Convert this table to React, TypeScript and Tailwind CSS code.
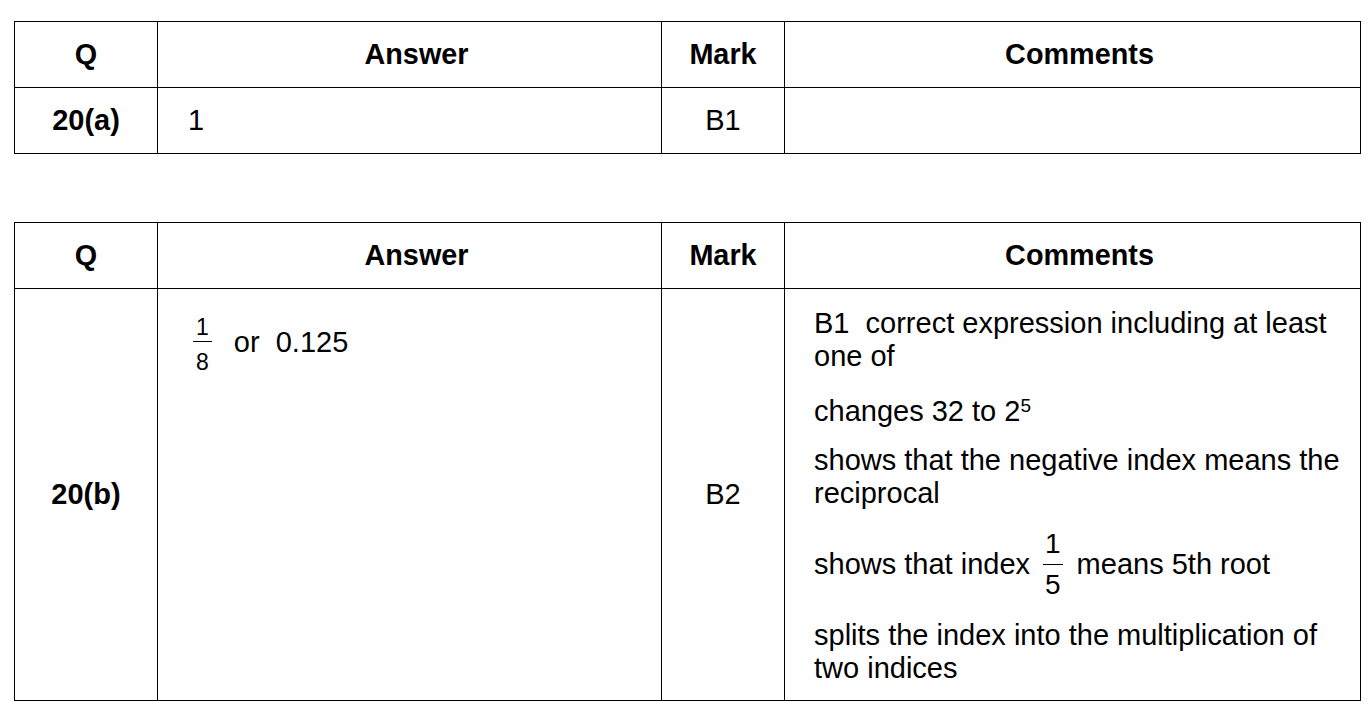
import React from "react";

const cell = "border border-black p-0";

function Frac({ num, den, small }: { num: string; den: string; small?: boolean }) {
  if (small) {
    return (
      <span className="inline-flex flex-col items-stretch pt-[4px] text-[23px] leading-[24px]">
        <span className="px-[3px] pb-[2px] text-center">{num}</span>
        <span className="h-px bg-black" />
        <span className="px-[3px] pt-[8px] text-center">{den}</span>
      </span>
    );
  }
  return (
    <span className="ml-[13px] mr-[14px] inline-flex flex-col items-stretch text-[28px] leading-[28px]">
      <span className="px-[2px] pb-[6px] text-center">{num}</span>
      <span className="h-px bg-black" />
      <span className="px-[2px] pt-[6px] text-center">{den}</span>
    </span>
  );
}

function Header() {
  return (
    <thead>
      <tr className="h-[66px] text-[28.8px] font-bold">
        <th className={cell}>Q</th>
        <th className={`${cell} pl-[14px]`}>Answer</th>
        <th className={cell}>Mark</th>
        <th className={`${cell} pl-[14px]`}>Comments</th>
      </tr>
    </thead>
  );
}

function Cols() {
  return (
    <colgroup>
      <col className="w-[143px]" />
      <col className="w-[504px]" />
      <col className="w-[123px]" />
      <col className="w-[576px]" />
    </colgroup>
  );
}

export default function App() {
  return (
    <div className="min-h-[715px] bg-white pl-[14px] pt-[21px] font-['Liberation_Sans',Arial,sans-serif] text-[29px] leading-[33px] text-black">
      <table className="w-[1346px] table-fixed border-collapse">
        <Cols />
        <Header />
        <tbody>
          <tr className="h-[66px]">
            <td className={`${cell} text-center font-bold`}>20(a)</td>
            <td className={`${cell} pl-[30px]`}>1</td>
            <td className={`${cell} text-center`}>B1</td>
            <td className={cell}></td>
          </tr>
        </tbody>
      </table>

      <table className="mt-[68px] w-[1346px] table-fixed border-collapse">
        <Cols />
        <Header />
        <tbody>
          <tr>
            <td className={`${cell} text-center font-bold`}>20(b)</td>
            <td className={`${cell} pl-[35px] pt-[22px] align-top`}>
              <div className="flex items-center">
                <Frac num="1" den="8" small />
                <span className="ml-[22px] whitespace-pre">or  0.125</span>
              </div>
            </td>
            <td className={`${cell} text-center`}>B2</td>
            <td className={`${cell} pb-[15px] pl-[29px] pr-[8px] pt-[18px] align-top`}>
              <p>B1&nbsp; correct expression including at least one of</p>
              <p className="mt-[22px]">
                changes 32 to 2<sup className="text-[19px]">5</sup>
              </p>
              <p className="mt-[16px]">shows that the negative index means the reciprocal</p>
              <div className="mt-[20px] flex items-center">
                <span>shows that index</span>
                <Frac num="1" den="5" />
                <span>means 5th root</span>
              </div>
              <p className="mt-[20px]">splits the index into the multiplication of two indices</p>
            </td>
          </tr>
        </tbody>
      </table>
    </div>
  );
}
